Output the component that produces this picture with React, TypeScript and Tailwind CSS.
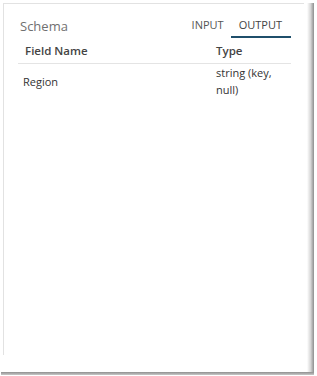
import React from "react";

export default function App() {
  return (
    <div className="w-[317px] h-[376px] bg-white" style={{ fontFamily: '"Open Sans", "Noto Sans", sans-serif' }}>
      <div className="flex h-[372px] pt-[3px] pl-[1px]">
        <div className="flex-1 flex flex-col pl-[2px]">
          <div className="h-[352px] border-l border-t border-[#e2e2e2] mr-[3px]">
            <div className="flex items-end justify-between pl-[16px] pr-[13px] h-[34px]">
              <div className="text-[13px] leading-[18px] text-[#707070] mb-[3px]">Schema</div>
              <div className="flex text-[11px] leading-[15px] text-[#555]">
                <div className="px-[2px] pb-[6px]">INPUT</div>
                <div className="ml-[5px] pl-[8px] pr-[9px] pb-[4px] border-b-2 border-[#1f4f6b] text-[#444]">OUTPUT</div>
              </div>
            </div>
            <div className="ml-[14px] mr-[13px] flex border-b border-[#e4e4e4] h-[26px] items-center text-[11.5px] font-semibold text-[#444]">
              <div className="w-[198px] pl-[7px]">Field Name</div>
              <div>Type</div>
            </div>
            <div className="ml-[14px] mr-[13px] flex text-[11px] leading-[17px] text-[#333]">
              <div className="w-[198px] pl-[5px] self-center">Region</div>
              <div className="w-[72px]">string (key, null)</div>
            </div>
          </div>
        </div>
        <div className="w-[7px] bg-gradient-to-r from-white via-[#d8d8d8] to-[#8f8f8f]" />
        <div className="w-[3px]" />
      </div>
      <div className="ml-[1px] w-[313px] h-[3px] bg-gradient-to-b from-[#8f8f8f] to-[#c8c8c8]" />
    </div>
  );
}
